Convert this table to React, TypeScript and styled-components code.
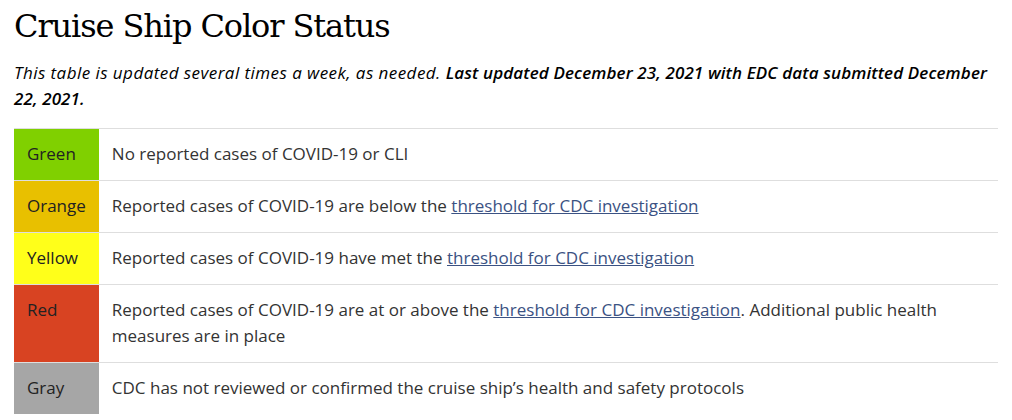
import React from "react";
import styled, { createGlobalStyle } from "styled-components";

const Global = createGlobalStyle`
  html, body { margin: 0; padding: 0; background: #fff; }
  body { font-family: "Open Sans", "Noto Sans", sans-serif; color: #1b1b1b; }
`;

const Page = styled.div`
  padding: 0 14px 0 14px;
  width: 984px;
`;

const Title = styled.h1`
  font-family: "DejaVu Serif", "Liberation Serif", serif;
  font-weight: 400;
  font-size: 32px;
  line-height: 40px;
  margin: 6px 0 0 0;
  color: #000;
  letter-spacing: -1.1px;
`;

const Intro = styled.p`
  font-style: italic;
  font-size: 17px;
  line-height: 26px;
  margin: 14px 0 16px 0;
  color: #000;
  letter-spacing: 0.45px;
  b { font-weight: 600; letter-spacing: 0.12px; }
`;

const Table = styled.table`
  width: 100%;
  border-collapse: collapse;
  font-size: 17px;
  line-height: 26px;
`;

const Row = styled.tr`
  border-top: 1px solid #dedede;
`;

const Swatch = styled.td<{ $bg: string }>`
  background: ${(p) => p.$bg};
  width: 57px;
  padding: 12px 13px 13px 13px;
  vertical-align: top;
  color: #222;
`;

const Desc = styled.td`
  padding: 12px 13px 13px 13px;
  vertical-align: top;
  color: #333;
`;

const Link = styled.a`
  color: #3b5283;
  text-decoration: underline;
`;

const LinkText = () => <Link href="#">threshold for CDC investigation</Link>;

export default function App() {
  return (
    <Page>
      <Global />
      <Title>Cruise Ship Color Status</Title>
      <Intro>
        This table is updated several times a week, as needed.{" "}
        <b>Last updated December 23, 2021 with EDC data submitted December 22, 2021.</b>
      </Intro>
      <Table>
        <tbody>
          <Row>
            <Swatch $bg="#80d000">Green</Swatch>
            <Desc>No reported cases of COVID-19 or CLI</Desc>
          </Row>
          <Row>
            <Swatch $bg="#e8c000">Orange</Swatch>
            <Desc>
              Reported cases of COVID-19 are below the <LinkText />
            </Desc>
          </Row>
          <Row>
            <Swatch $bg="#ffff1a">Yellow</Swatch>
            <Desc>
              Reported cases of COVID-19 have met the <LinkText />
            </Desc>
          </Row>
          <Row>
            <Swatch $bg="#d84322">Red</Swatch>
            <Desc>
              Reported cases of COVID-19 are at or above the <LinkText />. Additional public health
              measures are in place
            </Desc>
          </Row>
          <Row>
            <Swatch $bg="#a6a6a6">Gray</Swatch>
            <Desc>CDC has not reviewed or confirmed the cruise ship’s health and safety protocols</Desc>
          </Row>
        </tbody>
      </Table>
    </Page>
  );
}
